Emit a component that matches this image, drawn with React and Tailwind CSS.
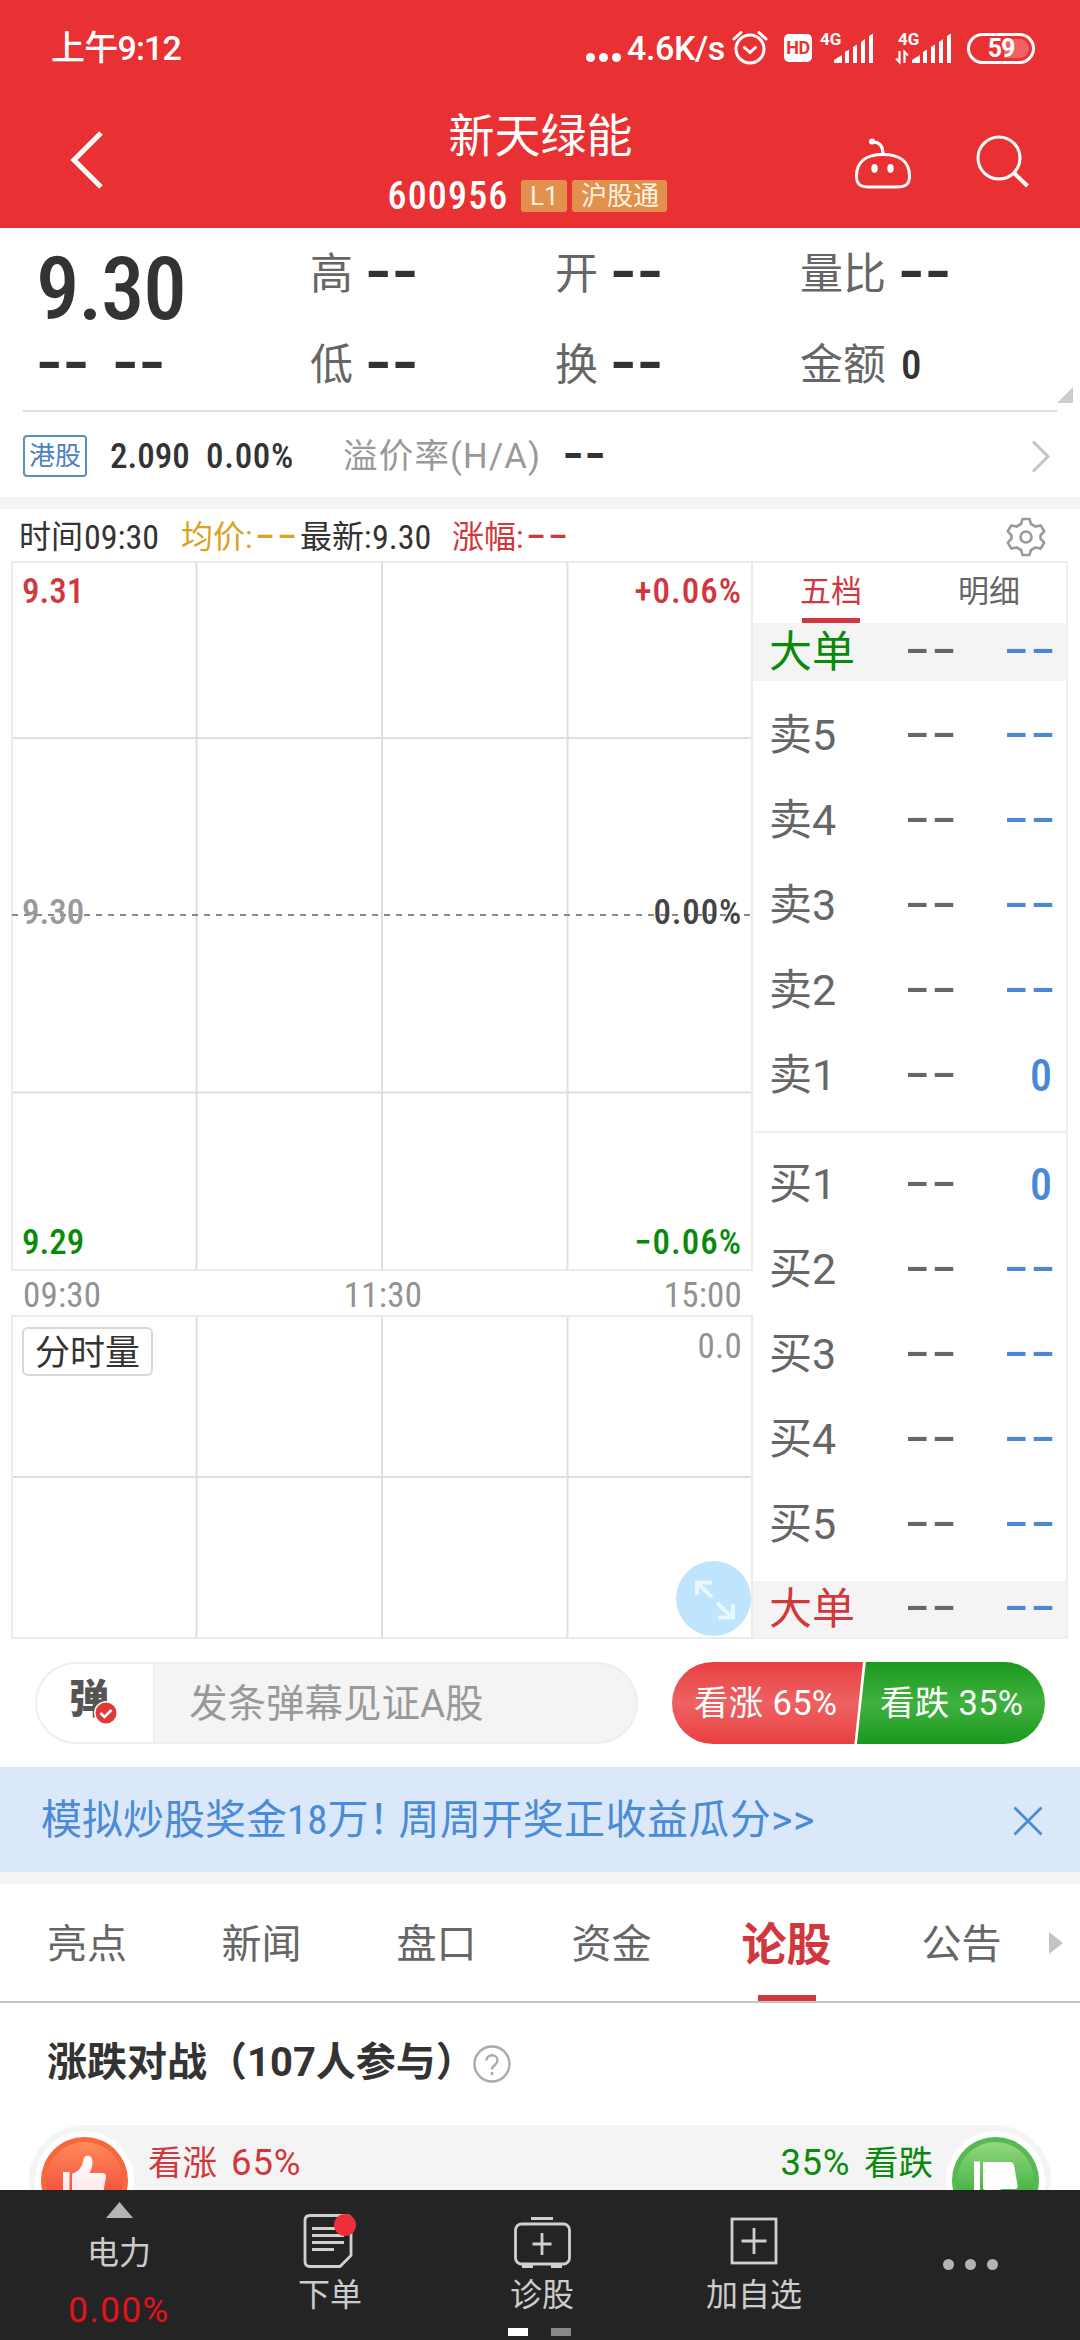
const sellRows = [
  { label: '卖5' },
  { label: '卖4' },
  { label: '卖3' },
  { label: '卖2' },
  { label: '卖1', volume: '0' },
];

const buyRows = [
  { label: '买1', volume: '0' },
  { label: '买2' },
  { label: '买3' },
  { label: '买4' },
  { label: '买5' },
];

const tabs = ['亮点', '新闻', '盘口', '资金', '论股', '公告'];

const Num = ({ className = '', children }) => (
  <span className={`font-["Roboto_Condensed",sans-serif] ${className}`}>{children}</span>
);

// Empty value placeholder
const Dashes = ({ small, className = '' }) => (
  <span
    className={`inline-flex shrink-0 font-["Liberation_Mono",monospace] leading-none ${
      small ? 'w-[37px] text-[42px]' : 'w-[46px] text-[52px]'
    } ${className}`}
  >
    <span
      className={`origin-left ${
        small
          ? '-ml-[8px] scale-x-[1.28] tracking-[-8px]'
          : '-ml-[10px] scale-x-[1.3] tracking-[-10.6px]'
      }`}
    >
      --
    </span>
  </span>
);

const Signal = ({ data }) => (
  <svg className="h-[32px] w-[57px] overflow-visible" viewBox="0 0 57 32">
    <text x="3" y="13" fill="#fff" fontSize="17" fontWeight="700" fontFamily="Roboto">4G</text>
    {data && (
      <g stroke="#fff" strokeWidth="2.2" fill="none">
        <path d="M4.5 19v11l-3.5-3.500M9.500 31V20l3.500 3.500" />
      </g>
    )}
    <g fill="#fff">
      <path d="M17 31v-3l8-5v8z" />
      <path d="M28 31V20l4-2.500V31zM36 31V15l4-2.500V31zM44 31V10l4-3V31zM52 31V4l4-2.500V31z" />
    </g>
  </svg>
);

const StatusBar = () => (
  <div className="flex h-[96px] items-center pl-[51px] pr-[45px]">
    <span className="text-[34px] font-medium leading-none tracking-[-0.8px]">上午9:12</span>
    <div className="ml-auto flex items-center">
      <div className="mt-[18px] mr-[6px] flex gap-[4px]">
        <i className="size-[9px] rounded-full bg-white" />
        <i className="size-[9px] rounded-full bg-white" />
        <i className="size-[9px] rounded-full bg-white" />
      </div>
      <span className="w-[105px] text-[34px] font-medium leading-none tracking-[-0.4px]">4.6K/s</span>
      <svg className="h-[36px] w-[36px]" viewBox="0 0 36 36" fill="none" stroke="#fff" strokeWidth="3" strokeLinecap="round">
        <circle cx="18" cy="19" r="14" />
        <path d="M12.500 17.500l5.500 5 5.500-5M2 9l7-6.500M34 9l-7-6.500" />
      </svg>
      <span className="ml-[16px] flex h-[28px] w-[28px] items-center justify-center rounded-[5px] bg-white text-[18px] font-bold leading-none tracking-[-0.5px] text-[#e93133]">
        HD
      </span>
      <div className="ml-[5px]">
        <Signal />
      </div>
      <div className="ml-[21px]">
        <Signal data />
      </div>
      <div className="ml-[15px] flex h-[31px] w-[68px] items-center rounded-full border-[3px] border-white p-[3px]">
        <div className="flex h-full w-full items-center justify-center rounded-full bg-linear-to-r from-transparent from-55% to-white/25 to-55%">
          <span className="text-[25px] font-bold leading-none tracking-[-1px]">59</span>
        </div>
      </div>
    </div>
  </div>
);

const Header = () => (
  <div className="flex h-[132px] items-start justify-between pl-[70px] pr-[50px]">
    <svg className="mt-[34px] h-[60px] w-[34px]" viewBox="0 0 34 60" fill="none" stroke="#fff" strokeWidth="5">
      <path d="M31 3L4 30l27 27" />
    </svg>
    <div className="mr-[-13px] ml-[111px] flex flex-1 flex-col items-center">
      <h1 className="mt-[12px] text-[46px] leading-[56px]">新天绿能</h1>
      <div className="mt-[15px] mr-[26px] flex h-[34px] items-center">
        <Num className="text-[38px] font-medium leading-none tracking-[0.03em]">600956</Num>
        <span className="ml-[13px] flex h-[32px] w-[46px] items-center justify-center rounded-[3px] bg-[#e2904e] text-[26px] leading-none text-[#fff3e0]">
          L1
        </span>
        <span className="ml-[5px] flex h-[32px] w-[95px] items-center justify-center rounded-[3px] bg-[#e2904e] text-[26px] leading-none text-[#fff3e0]">
          沪股通
        </span>
      </div>
    </div>
    <svg className="mt-[40px] h-[56px] w-[60px]" viewBox="853 136 60 56" fill="none" stroke="#fff" strokeWidth="3">
      <path d="M883 154.500C866 154.500 856.500 162 856.500 176C856.500 185 861 187 869 187H897C905 187 909.500 185 909.500 176C909.500 162 900 154.500 883 154.500Z" />
      <path d="M883 154c0-8-3-12-10-12" />
      <circle cx="872" cy="141.500" r="3" fill="#fff" stroke="none" />
      <ellipse cx="874.500" cy="168.500" rx="3.200" ry="4.400" fill="#fff" stroke="none" />
      <ellipse cx="890.500" cy="168.500" rx="3.200" ry="4.400" fill="#fff" stroke="none" />
    </svg>
    <svg className="mt-[38px] ml-[63px] h-[54px] w-[54px]" viewBox="976 134 54 54" fill="none" stroke="#fff" strokeWidth="3">
      <circle cx="999" cy="158" r="21" />
      <path d="M1014 173l13.500 13" strokeWidth="4" />
    </svg>
  </div>
);

const Stat = ({ label, value }) => (
  <div className="flex items-center text-[43px] leading-none text-[#666]">
    <span className="mr-[15px]">{label}</span>
    {value ? (
      <Num className="text-[41px] font-medium text-[#333]">{value}</Num>
    ) : (
      <Dashes className="font-bold text-[#333]" />
    )}
  </div>
);

const Quote = () => (
  <div className="relative h-[182px]">
    <div className="grid grid-cols-[274px_245px_245px_1fr] grid-rows-[90px_92px] pt-[1px] pl-[36px]">
      <div className="flex items-start pt-[13px]">
        <Num className="text-[87px] font-medium leading-[94px] tracking-[-0.015em] text-[#333]">9.30</Num>
      </div>
      <Stat label="高" />
      <Stat label="开" />
      <Stat label="量比" />
      <div className="flex items-center pl-[3px] font-bold text-[#333]">
        <Dashes />
        <Dashes className="ml-[30px]" />
      </div>
      <Stat label="低" />
      <Stat label="换" />
      <Stat label="金额" value="0" />
    </div>
    <svg className="absolute right-[7px] bottom-[7px] size-[16px]" viewBox="0 0 16 16" fill="#ccc">
      <path d="M16 0v16H0z" />
    </svg>
  </div>
);

const HkRow = () => (
  <div className="mx-[23px] flex h-[87px] items-center border-t-2 border-[#dedede] pt-[3px] leading-none">
    <span className="flex h-[42px] w-[64px] items-center justify-center rounded-[4px] border-2 border-[#5a8fc6] text-[26px] text-[#4a80c0]">
      港股
    </span>
    <Num className="ml-[23px] w-[96px] text-[35px] font-medium text-[#333]">2.090</Num>
    <Num className="w-[137px] text-[35px] font-medium tracking-[0.02em] text-[#333]">0.00%</Num>
    <span className="w-[222px] text-[34.500px] tracking-[1.2px] text-[#999]">溢价率(H/A)</span>
    <Dashes small className="font-bold text-[#333]" />
    <svg className="mr-[6px] ml-auto h-[33px] w-[20px]" viewBox="0 0 20 33" fill="none" stroke="#c4c4c4" strokeWidth="3">
      <path d="M2 1.500l15 15-15 15" />
    </svg>
  </div>
);

const InfoRow = () => (
  <div className="flex h-[52px] items-center pt-[3px] pl-[19px] text-[32px] leading-none text-[#333]">
    <span className="w-[65px]">时间</span>
    <Num className="w-[97px] text-[34px]">09:30</Num>
    <span className="w-[76px] text-[#d9a322]">均价:</span>
    <Dashes small className="mr-[6px] text-[#d9a322]" />
    <span className="w-[72px] whitespace-nowrap">最新:</span>
    <Num className="w-[80px] text-[34px]">9.30</Num>
    <span className="w-[76px] text-[#d0383e]">涨幅:</span>
    <Dashes small className="text-[#d0383e]" />
    <svg className="mr-[34px] ml-auto size-[40px]" viewBox="0 0 40 40" fill="none" stroke="#999" strokeWidth="2.600" strokeLinejoin="round">
      <path d="M16.500 2h7l1.500 5 4.500 2.600 5.200-1.200 3.500 6-3.700 4v3.200l3.700 4-3.500 6-5.200-1.200L25 33l-1.500 5h-7L15 33l-4.500-2.600-5.200 1.200-3.500-6 3.700-4v-3.200l-3.700-4 3.500-6 5.200 1.200L15 7z" />
      <circle cx="20" cy="20" r="5.500" />
    </svg>
  </div>
);

const Chart = () => (
  <div className="relative h-[1078px] w-[742px]">
    <svg className="block h-[1078px] w-[742px]" viewBox="11 561 742 1078" fill="none">
      <g stroke="#dedede" strokeWidth="2">
        <path d="M196.500 562V1270M382 562V1270M567.500 562V1270M12 738H752M12 1092.500H752" />
        <path d="M196.500 1317V1638M382 1317V1638M567.500 1317V1638M12 1477H752" />
      </g>
      <g stroke="#ebebeb" strokeWidth="2">
        <rect x="12" y="562" width="740" height="708" />
        <rect x="12" y="1316" width="740" height="322" />
      </g>
      <path d="M12 915H752" stroke="#8a8a8a" strokeWidth="2" strokeDasharray="6 6" />
      <g fontFamily="Roboto Condensed" fontWeight="500" fontSize="35">
        <text x="22" y="603" fill="#d0383e">9.31</text>
        <text x="742" y="603" fill="#d0383e" textAnchor="end" letterSpacing="1">+0.06%</text>
        <text x="22" y="924" fill="#999">9.30</text>
        <text x="742" y="924" fill="#444" textAnchor="end" letterSpacing="0.8">0.00%</text>
        <text x="22" y="1254" fill="#0a8a0a">9.29</text>
        <text x="742" y="1254" fill="#0a8a0a" textAnchor="end" letterSpacing="1">−0.06%</text>
      </g>
      <g fontFamily="Roboto Condensed" fontSize="35" fill="#929292" letterSpacing="0.2">
        <text x="23" y="1307">09:30</text>
        <text x="383" y="1307" textAnchor="middle">11:30</text>
        <text x="742" y="1307" textAnchor="end">15:00</text>
        <text x="742" y="1358" textAnchor="end">0.0</text>
      </g>
    </svg>
    <div className="absolute top-[766px] left-[11px] flex h-[49px] w-[131px] items-center justify-center rounded-[6px] border-2 border-[#d8d8d8] bg-white pt-[3px] text-[35px] leading-none text-[#333]">
      分时量
    </div>
    <div className="absolute top-[1000px] left-[665px] size-[75px] rounded-full bg-[#bfe4fe]">
      <svg className="size-[75px]" viewBox="0 0 75 75" fill="none" stroke="#eaf7fd" strokeWidth="4">
        <path d="M36 36L21 22M21 34V21.500h15M41 42l15 14M57 43v13.500H42" />
      </svg>
    </div>
  </div>
);

const BookRow = ({ label, volume, labelClass = 'text-[#666]' }) => (
  <div className="flex h-[85px] items-center pr-[14px] pl-[16px] text-[43px] leading-none">
    <span className={`w-[138px] ${labelClass}`}>{label}</span>
    <Dashes className="text-[#666]" />
    {volume ? (
      <Num className="ml-auto text-[44px] font-medium text-[#4a88d6]">{volume}</Num>
    ) : (
      <Dashes className="ml-auto text-[#4a88d6]" />
    )}
  </div>
);

const OrderBook = () => (
  <div className="flex h-[1078px] w-[315px] flex-col border-2 border-l-0 border-[#efefef]">
    <div className="flex h-[60px] text-[31px] leading-none text-[#666]">
      <div className="ml-[49px] flex w-[58px] flex-col items-center justify-between whitespace-nowrap text-[#d0383e]">
        <span className="mt-[13px]">五档</span>
        <i className="h-[5px] w-[58px] bg-[#d0383e]" />
      </div>
      <span className="mt-[13px] ml-[98px]">明细</span>
    </div>
    <div className="flex h-[58px] items-center bg-[#f4f4f4] [&>div]:w-full">
      <BookRow label="大单" labelClass="text-[#0a8a0a]" />
    </div>
    <div className="h-[450px] pt-[12px]">
      {sellRows.map((row) => (
        <BookRow key={row.label} {...row} />
      ))}
    </div>
    <div className="h-[450px] border-t-2 border-[#efefef] pt-[9px]">
      {buyRows.map((row) => (
        <BookRow key={row.label} {...row} />
      ))}
    </div>
    <div className="flex min-h-0 flex-1 items-center bg-[#f4f4f4] [&>div]:w-full">
      <BookRow label="大单" labelClass="text-[#d0383e]" />
    </div>
  </div>
);

const DanmuBar = () => (
  <div className="flex h-[128px] items-start pt-[23px] pl-[35px] leading-none">
    <div className="flex h-[82px] w-[603px] overflow-hidden rounded-full border-2 border-[#eee] bg-[#f4f4f4]">
      <div className="relative w-[118px] border-r-2 border-[#eee] bg-white">
        <span className="absolute top-[16px] left-[32px] text-[40px] font-black text-[#555]">弹</span>
        <svg className="absolute top-[37px] left-[57px] size-[24px]" viewBox="0 0 24 24">
          <circle cx="12" cy="12" r="12" fill="#fff" />
          <circle cx="12" cy="12" r="10.500" fill="#e03a38" />
          <path d="M6.500 12l4 4 7-7" fill="none" stroke="#fff" strokeWidth="2.500" />
        </svg>
      </div>
      <span className="flex items-center pt-[2px] pl-[34px] text-[38.500px] text-[#999]">发条弹幕见证A股</span>
    </div>
    <div className="ml-[34px] flex h-[82px] w-[373px] overflow-hidden rounded-full text-[34.500px] text-white">
      <div className="flex w-[191px] items-center bg-linear-to-b from-[#e83f41] via-[#ee6162] to-[#e83f41] pl-[22px] tracking-[0.3px] [clip-path:polygon(0_0,100%_0,95.500%_100%,0_100%)]">
        看涨 65%
      </div>
      <div className="-ml-[7px] flex flex-1 items-center bg-linear-to-b from-[#18991b] via-[#3fb13f] to-[#18991b] pl-[24px] tracking-[0.3px] [clip-path:polygon(5.200%_0,100%_0,100%_100%,0.500%_100%)]">
        看跌 35%
      </div>
    </div>
  </div>
);

const Banner = () => (
  <div className="flex h-[105px] items-center justify-between bg-[#dae8fa] pt-[2px] pr-[37px] pl-[41px] text-[41px] leading-none text-[#4a8bd8]">
    <span>
      模拟炒股奖金<Num>18</Num>万<span className="mr-[-11px]">！</span>
      <span className="tracking-[0.4px]">周周开奖正收益瓜分&gt;&gt;</span>
    </span>
    <svg className="size-[30px]" viewBox="0 0 30 30" fill="none" stroke="#4a8bd8" strokeWidth="2.800">
      <path d="M1.500 1.500l27 27M28.500 1.500l-27 27" />
    </svg>
  </div>
);

const TabBar = () => (
  <div className="relative flex h-[119px] items-center border-b-2 border-[#c4c4c4] leading-none text-[#666]">
    {tabs.map((tab) =>
      tab === '论股' ? (
        <div key={tab} className="relative flex h-full w-[175px] items-center justify-center pt-[6px] text-[45px] font-bold text-[#d0383e]">
          {tab}
          <i className="absolute bottom-0 h-[6px] w-[58px] bg-[#d0383e]" />
        </div>
      ) : (
        <div key={tab} className="flex w-[175px] justify-center pt-[5px] text-[40px] first:w-[174px]">
          {tab}
        </div>
      )
    )}
    <svg className="absolute right-[17px] h-[22px] w-[14px]" viewBox="0 0 14 22" fill="#c4c4c4">
      <path d="M0 0l14 11L0 22z" />
    </svg>
  </div>
);

const Battle = () => (
  <div className="pt-[38px] leading-none">
    <div className="flex h-[44px] items-center pl-[47px]">
      <h2 className="text-[40px] font-bold text-[#333]">涨跌对战（107人参与）</h2>
      <svg className="mt-[1px] -ml-[3px] size-[38px]" viewBox="0 0 38 38" fill="none" stroke="#aaa" strokeWidth="2.400">
        <circle cx="19" cy="19" r="17.500" />
        <path d="M13.500 15.500c0-7 11-7 11 0 0 4.500-5.500 4.500-5.500 9M19 27v3" />
      </svg>
    </div>
    <div className="mx-[29px] mt-[40px] flex h-[112px] items-start justify-between rounded-full bg-[#f4f4f4] px-[6px] pt-[6px]">
      <svg className="size-[99px]" viewBox="35 2131 99 99">
        <defs>
          <linearGradient id="up" x1="0" y1="0" x2="0" y2="1">
            <stop offset="0" stopColor="#ff8a5c" />
            <stop offset="0.600" stopColor="#f5573f" />
          </linearGradient>
          <linearGradient id="palm" x1="0" y1="0" x2="0" y2="1">
            <stop offset="0" stopColor="#fff" />
            <stop offset="1" stopColor="#ffdcdc" />
          </linearGradient>
        </defs>
        <circle cx="84.500" cy="2180.500" r="49.500" fill="#fff" />
        <circle cx="84.500" cy="2180.500" r="43.500" fill="#f4683c" />
        <circle cx="84.500" cy="2180.500" r="38.500" fill="url(#up)" />
        <path d="M63 2172h6.500v36H63zM72 2174c7-3 10-7 11-13 .5-7 9.500-7 9.500 1 0 4-1 7-3 11h13c3 0 4 2 3.500 4l-5 28c-.5 2-2 4-5 4H72z" fill="url(#palm)" />
      </svg>
      <div className="flex flex-1 items-center justify-between pt-[14px] pr-[13px] pl-[14px] text-[34.500px]">
        <span className="flex items-center gap-[14px] text-[#d0383e]">
          看涨<span className="text-[36.500px] tracking-[0.9px]">65%</span>
        </span>
        <span className="flex items-center gap-[14px] text-[#0a8a0a]">
          <span className="text-[36.500px] tracking-[0.6px]">35%</span>看跌
        </span>
      </div>
      <svg className="size-[99px]" viewBox="948 2131 99 99">
        <defs>
          <linearGradient id="down" x1="0" y1="0" x2="0" y2="1">
            <stop offset="0" stopColor="#93d780" />
            <stop offset="0.600" stopColor="#4cb748" />
          </linearGradient>
        </defs>
        <circle cx="997.500" cy="2180.500" r="49.500" fill="#fff" />
        <circle cx="997.500" cy="2180.500" r="43.500" fill="#58b953" />
        <circle cx="997.500" cy="2180.500" r="38.500" fill="url(#down)" />
        <path d="M976 2161.500h6v29h-6zM985 2162h27q3 0 4 3l3.500 20q1 4-3 4h-14q1 6 0 12h-8q-1-9-9.500-12z" fill="#fff" />
      </svg>
    </div>
  </div>
);

const BottomBar = () => (
  <div className="relative flex h-[150px] shrink-0 bg-[#242424] text-[32px] leading-none text-[#ccc]">
    <div className="flex w-[224px] flex-col items-center pt-[12px] pl-[14px]">
      <svg className="h-[16px] w-[27px]" viewBox="0 0 27 16" fill="#b4b4b4">
        <path d="M13.500 0L27 16H0z" />
      </svg>
      <span className="mt-[19px]">电力</span>
      <span className="mt-[24px] text-[35px] tracking-[1.5px] text-[#e8101a]">0.00%</span>
    </div>
    <div className="flex w-[212px] flex-col items-center pt-[22px]">
      <svg className="h-[56px] w-[54px]" viewBox="305 2211 54 56" fill="none" stroke="#d0d0d0" strokeWidth="2.800">
        <path d="M312 2214.500h36q5 0 5 5v35l-11 11h-30q-5 0-5-5v-41q0-5 5-5z" />
        <path d="M314 2227.500h28M314 2234.500h32M314 2241.500h32M314 2248.500h22" />
        <circle cx="347" cy="2224" r="11" fill="#ee2f37" stroke="none" />
      </svg>
      <span className="mt-[11px]">下单</span>
    </div>
    <div className="flex w-[212px] flex-col items-center pt-[22px]">
      <svg className="h-[56px] w-[60px]" viewBox="512 2211 60 56" fill="none" stroke="#d0d0d0" strokeWidth="2.800">
        <rect x="515.500" y="2223" width="54" height="40" rx="6" />
        <path d="M531 2217.500h22M542 2232v22M532.500 2243h19" />
        <path d="M522 2265h11M551 2265h11" strokeWidth="4" />
      </svg>
      <span className="mt-[11px]">诊股</span>
    </div>
    <div className="flex w-[212px] flex-col items-center pt-[22px]">
      <svg className="h-[56px] w-[50px]" viewBox="729 2211 50 56" fill="none" stroke="#d0d0d0" strokeWidth="2.800">
        <rect x="732" y="2218" width="44" height="44" />
        <path d="M754 2227v26M741.500 2240h25" />
      </svg>
      <span className="mt-[11px]">加自选</span>
    </div>
    <div className="flex flex-1 justify-center gap-[11px] pt-[69px]">
      <i className="size-[11px] rounded-full bg-[#b4b4b4]" />
      <i className="size-[11px] rounded-full bg-[#b4b4b4]" />
      <i className="size-[11px] rounded-full bg-[#b4b4b4]" />
    </div>
    <div className="absolute bottom-[4px] left-[508px] flex gap-[23px]">
      <i className="h-[8px] w-[20px] bg-white" />
      <i className="h-[8px] w-[20px] bg-[#888]" />
    </div>
  </div>
);

export default function App() {
  return (
    <div
      lang="zh-CN"
      className='flex h-[2340px] w-[1080px] flex-col overflow-hidden bg-white font-["Roboto","Noto_Sans_CJK_SC",sans-serif]'
    >
      <div className="h-[228px] shrink-0 bg-[#e93133] text-white">
        <StatusBar />
        <Header />
      </div>
      <div className="min-h-0 flex-1 overflow-hidden">
        <Quote />
        <HkRow />
        <div className="h-[12px] bg-[#f4f4f4]" />
        <InfoRow />
        <div className="flex pl-[11px]">
          <Chart />
          <OrderBook />
        </div>
        <DanmuBar />
        <Banner />
        <div className="h-[12px] bg-[#f4f4f4]" />
        <TabBar />
        <Battle />
      </div>
      <BottomBar />
    </div>
  );
}
